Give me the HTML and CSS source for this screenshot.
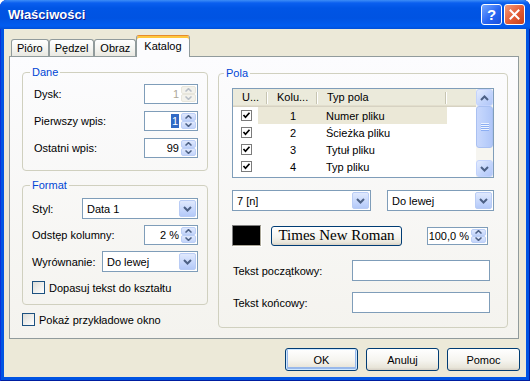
FILE: index.html
```html
<!DOCTYPE html>
<html>
<head>
    <meta charset="utf-8">
    <title>Właściwości</title>
    <link rel="stylesheet" href="styles.css">
</head>
<body>
    <div class="window">
        <div class="titlebar">
            <span class="title">Właściwości</span>
            <span class="cap-btn help">?</span>
            <span class="cap-btn close">
                <svg width="11" height="11" viewBox="0 0 11 11"><path d="M1.5 1.5 L9.5 9.5 M9.5 1.5 L1.5 9.5" stroke="#fff" stroke-width="2" stroke-linecap="square"/></svg>
            </span>
        </div>

        <div class="client">
            <div class="tabs">
                <span class="tab">Pióro</span>
                <span class="tab">Pędzel</span>
                <span class="tab">Obraz</span>
                <span class="tab active">Katalog</span>
            </div>

            <div class="tab-panel">
                <div class="left-col">
                    <fieldset class="group group-data">
                        <legend>Dane</legend>
                        <div class="field">
                            <label>Dysk:</label>
                            <div class="spin spin-count disabled">
                                <span class="spin-value">1</span>
                                <span class="spin-btns">
                                    <span class="spin-btn"><svg width="7" height="4"><use href="#arrow-up"/></svg></span>
                                    <span class="spin-btn"><svg width="7" height="4"><use href="#arrow-down"/></svg></span>
                                </span>
                            </div>
                        </div>
                        <div class="field">
                            <label>Pierwszy wpis:</label>
                            <div class="spin spin-count">
                                <span class="spin-value"><span class="selected-text">1</span></span>
                                <span class="spin-btns">
                                    <span class="spin-btn"><svg width="7" height="4"><use href="#arrow-up"/></svg></span>
                                    <span class="spin-btn"><svg width="7" height="4"><use href="#arrow-down"/></svg></span>
                                </span>
                            </div>
                        </div>
                        <div class="field">
                            <label>Ostatni wpis:</label>
                            <div class="spin spin-count">
                                <span class="spin-value">99</span>
                                <span class="spin-btns">
                                    <span class="spin-btn"><svg width="7" height="4"><use href="#arrow-up"/></svg></span>
                                    <span class="spin-btn"><svg width="7" height="4"><use href="#arrow-down"/></svg></span>
                                </span>
                            </div>
                        </div>
                    </fieldset>

                    <fieldset class="group group-format">
                        <legend>Format</legend>
                        <div class="field">
                            <label>Styl:</label>
                            <div class="combo combo-style">
                                <span class="combo-text">Data 1</span>
                                <span class="combo-btn"><svg width="9" height="6"><use href="#chevron"/></svg></span>
                            </div>
                        </div>
                        <div class="field">
                            <label>Odstęp kolumny:</label>
                            <div class="spin spin-count">
                                <span class="spin-value">2 %</span>
                                <span class="spin-btns">
                                    <span class="spin-btn"><svg width="7" height="4"><use href="#arrow-up"/></svg></span>
                                    <span class="spin-btn"><svg width="7" height="4"><use href="#arrow-down"/></svg></span>
                                </span>
                            </div>
                        </div>
                        <div class="field">
                            <label>Wyrównanie:</label>
                            <div class="combo combo-align">
                                <span class="combo-text">Do lewej</span>
                                <span class="combo-btn"><svg width="9" height="6"><use href="#chevron"/></svg></span>
                            </div>
                        </div>
                        <label class="check-row">
                            <span class="xp-check"></span>
                            Dopasuj tekst do kształtu
                        </label>
                    </fieldset>

                    <label class="check-row preview-check">
                        <span class="xp-check"></span>
                        Pokaż przykładowe okno
                    </label>
                </div>

                <fieldset class="group group-fields">
                    <legend>Pola</legend>
                    <div class="listview">
                        <div class="lv-body">
                            <div class="lv-header">
                                <span class="lv-col col-use">U...</span>
                                <span class="lv-col col-num">Kolu...</span>
                                <span class="lv-col col-type">Typ pola</span>
                                <span class="lv-col col-fill"></span>
                            </div>
                            <div class="lv-row">
                                <span class="lv-check"><span class="box"><svg width="9" height="9"><use href="#tick"/></svg></span></span>
                                <span class="lv-item selected">
                                    <span class="lv-num">1</span>
                                    <span class="lv-type">Numer pliku</span>
                                </span>
                            </div>
                            <div class="lv-row">
                                <span class="lv-check"><span class="box"><svg width="9" height="9"><use href="#tick"/></svg></span></span>
                                <span class="lv-item">
                                    <span class="lv-num">2</span>
                                    <span class="lv-type">Ścieżka pliku</span>
                                </span>
                            </div>
                            <div class="lv-row">
                                <span class="lv-check"><span class="box"><svg width="9" height="9"><use href="#tick"/></svg></span></span>
                                <span class="lv-item">
                                    <span class="lv-num">3</span>
                                    <span class="lv-type">Tytuł pliku</span>
                                </span>
                            </div>
                            <div class="lv-row">
                                <span class="lv-check"><span class="box"><svg width="9" height="9"><use href="#tick"/></svg></span></span>
                                <span class="lv-item">
                                    <span class="lv-num">4</span>
                                    <span class="lv-type">Typ pliku</span>
                                </span>
                            </div>
                        </div>
                        <div class="scrollbar">
                            <span class="sb-btn"><svg width="9" height="6"><use href="#chevron-up"/></svg></span>
                            <div class="sb-track">
                                <span class="sb-thumb"><span class="grip"></span></span>
                            </div>
                            <span class="sb-btn"><svg width="9" height="6"><use href="#chevron"/></svg></span>
                        </div>
                    </div>

                    <div class="pola-row combos">
                        <div class="combo combo-column">
                            <span class="combo-text">7 [n]</span>
                            <span class="combo-btn"><svg width="9" height="6"><use href="#chevron"/></svg></span>
                        </div>
                        <div class="combo combo-justify">
                            <span class="combo-text">Do lewej</span>
                            <span class="combo-btn"><svg width="9" height="6"><use href="#chevron"/></svg></span>
                        </div>
                    </div>

                    <div class="pola-row font-row">
                        <span class="color-swatch"></span>
                        <span class="btn font-btn">Times New Roman</span>
                        <div class="spin spin-scale">
                            <span class="spin-value">100,0 %</span>
                            <span class="spin-btns">
                                <span class="spin-btn"><svg width="7" height="4"><use href="#arrow-up"/></svg></span>
                                <span class="spin-btn"><svg width="7" height="4"><use href="#arrow-down"/></svg></span>
                            </span>
                        </div>
                    </div>

                    <div class="pola-row text-row first">
                        <label>Tekst początkowy:</label>
                        <span class="textbox"></span>
                    </div>
                    <div class="pola-row text-row">
                        <label>Tekst końcowy:</label>
                        <span class="textbox"></span>
                    </div>
                </fieldset>
            </div>

            <div class="dialog-buttons">
                <span class="btn default">OK</span>
                <span class="btn">Anuluj</span>
                <span class="btn">Pomoc</span>
            </div>
        </div>
    </div>

    <svg class="sprite">
        <symbol id="arrow-up" viewBox="0 0 7 4"><path d="M0.5 3.5 L3.5 0.6 L6.5 3.5" fill="none" stroke="#4d6185" stroke-width="1.5"/></symbol>
        <symbol id="arrow-down" viewBox="0 0 7 4"><path d="M0.5 0.5 L3.5 3.4 L6.5 0.5" fill="none" stroke="#4d6185" stroke-width="1.5"/></symbol>
        <symbol id="chevron" viewBox="0 0 9 6"><path d="M1 1 L4.5 4.5 L8 1" fill="none" stroke="#4d6185" stroke-width="2"/></symbol>
        <symbol id="chevron-up" viewBox="0 0 9 6"><path d="M1 5 L4.5 1.5 L8 5" fill="none" stroke="#4d6185" stroke-width="2"/></symbol>
        <symbol id="tick" viewBox="0 0 9 9"><path d="M1.5 4 L3.5 6.2 L7.5 1.8" fill="none" stroke="#000" stroke-width="1.7"/></symbol>
    </svg>
</body>
</html>
```

FILE: styles.css
```css
* {
    box-sizing: border-box;
}

body {
    margin: 0;
    width: 530px;
    height: 381px;
    overflow: hidden;
    background: #ffffff;
    font-family: "Liberation Sans", Arial, sans-serif;
    font-size: 11px;
    color: #000;
}

.sprite {
    display: none;
}

/* Window frame */
.window {
    display: flex;
    flex-direction: column;
    width: 530px;
    height: 381px;
    background: #0054e3;
    border-radius: 7px 7px 0 0;
    box-shadow: inset 1px 0 #0831d9, inset -1px 0 #001ea0, inset 0 -1px #001ea0;
}

.titlebar {
    display: flex;
    align-items: center;
    gap: 2px;
    height: 29px;
    padding: 0 5px 0 8px;
    border-radius: 7px 7px 0 0;
    background: linear-gradient(#3d8df7 0, #0a5fef 3px, #0055e5 8px, #0053e2 18px, #005cf0 26px, #004fd8 29px);
}

.title {
    flex: 1;
    color: #fff;
    font-weight: bold;
    font-size: 13px;
    text-shadow: 1px 1px #0a1c8c;
}

.cap-btn {
    display: flex;
    align-items: center;
    justify-content: center;
    width: 21px;
    height: 21px;
    border: 1px solid #fff;
    border-radius: 3px;
    color: #fff;
}

.help {
    background: linear-gradient(135deg, #76a8ff, #2766f3 55%, #1a50dc);
    font-weight: bold;
    font-size: 15px;
}

.close {
    background: linear-gradient(135deg, #f29b7c, #e25a33 55%, #c4401b);
}

.client {
    flex: 1;
    display: flex;
    flex-direction: column;
    margin: 0 4px 4px;
    padding: 6px 6px 6px 5px;
    background: #ece9d8;
}

/* Tabs */
.tabs {
    position: relative;
    z-index: 1;
    display: flex;
    align-items: flex-end;
    height: 22px;
    margin-bottom: -1px;
    padding-left: 2px;
}

.tab {
    height: 17px;
    margin-bottom: 1px;
    padding: 0 5px;
    border: 1px solid #919b9c;
    border-bottom: none;
    border-radius: 3px 3px 0 0;
    background: linear-gradient(#ffffff, #f3f3ef 60%, #e9e8e1);
    line-height: 16px;
}

.tab.active {
    height: 22px;
    margin-bottom: 0;
    padding: 0 7px;
    border-top-color: #e68b2c;
    background: #fcfcfe;
    box-shadow: inset 0 2px #ffc73c;
    line-height: 21px;
}

.tab-panel {
    display: flex;
    align-items: flex-start;
    gap: 10px;
    height: 283px;
    margin-right: 1px;
    padding: 9px 0 0 12px;
    border: 1px solid #919b9c;
    background: linear-gradient(#fcfcfe, #f4f3ee);
}

.left-col {
    width: 186px;
}

/* Group boxes */
.group {
    margin: 0;
    min-width: 0;
    border: 1px solid #d0d0bf;
    border-radius: 4px;
}

.group legend {
    padding: 0 2px;
    color: #0046d5;
    line-height: 13px;
}

.group-data {
    padding: 5px 9px 12px 11px;
}

.group-data legend {
    margin-left: -4px;
}

.group-format {
    margin-top: 8px;
    padding: 6px 9px 10px 9px;
}

.group-format legend {
    margin-left: -2px;
}

.group-fields {
    width: 290px;
    margin-top: 1px;
    padding: 8px 13px 14px 13px;
}

.group-fields legend {
    margin-left: -8px;
}

.field {
    display: flex;
    align-items: center;
    justify-content: space-between;
}

.group-data .field + .field {
    margin-top: 7px;
}

.group-format .field + .field {
    margin-top: 6px;
}

/* Spin boxes */
.spin {
    display: flex;
    height: 20px;
    border: 1px solid #7f9db9;
    background: #fff;
}

.spin-count {
    width: 54px;
}

.spin-scale {
    width: 61px;
    height: 18px;
    margin-left: 25px;
}

.spin-value {
    flex: 1;
    padding-right: 2px;
    text-align: right;
    line-height: 18px;
    white-space: nowrap;
}

.spin-scale .spin-value {
    line-height: 16px;
}

.selected-text {
    display: inline-block;
    padding: 0 1px;
    line-height: 14px;
    background: #316ac5;
    color: #fff;
}

.spin-btns {
    display: flex;
    flex-direction: column;
    width: 15px;
    margin: 1px 1px 1px 0;
}

.spin-btn {
    flex: 1;
    display: flex;
    align-items: center;
    justify-content: center;
    border: 1px solid #bccff7;
    border-radius: 2px;
    background: linear-gradient(#dfe8fd, #c3d4fa);
}

.spin.disabled .spin-value {
    color: #aca899;
}

.spin.disabled .spin-btn {
    border-color: #e8e6dc;
    background: #f3f2ec;
}

.spin.disabled .spin-btn svg {
    opacity: 0.35;
}

/* Combo boxes */
.combo {
    display: flex;
    align-items: center;
    height: 21px;
    border: 1px solid #7f9db9;
    background: #fff;
}

.combo-style {
    width: 116px;
}

.combo-align {
    width: 96px;
}

.combo-column {
    width: 139px;
}

.combo-justify {
    width: 107px;
    margin-left: auto;
}

.combo-text {
    flex: 1;
    padding-left: 4px;
    white-space: nowrap;
}

.combo-btn {
    display: flex;
    align-items: center;
    justify-content: center;
    align-self: stretch;
    width: 17px;
    margin: 1px;
    border: 1px solid #b9ccf5;
    border-radius: 2px;
    background: linear-gradient(#e0e9fd, #c1d3fb 70%, #b4c9f8);
}

/* Checkboxes */
.check-row {
    display: flex;
    align-items: center;
    gap: 4px;
    height: 13px;
}

.group-format .check-row {
    margin-top: 9px;
}

.preview-check {
    margin-top: 8px;
}

.xp-check {
    width: 13px;
    height: 13px;
    border: 1px solid #1c5180;
    background: linear-gradient(135deg, #dcdcd7, #ffffff);
}

/* List view */
.listview {
    display: flex;
    height: 90px;
    border: 1px solid #7f9db9;
    background: #fff;
}

.lv-body {
    flex: 1;
}

.lv-header {
    display: flex;
    height: 18px;
    background: #ebeadb;
    box-shadow: inset 0 -1px #d6d2c2, inset 0 -2px #e2decd;
}

.lv-col {
    padding-left: 9px;
    line-height: 17px;
    white-space: nowrap;
    background: linear-gradient(#c7c5b2, #c7c5b2) no-repeat right 1px top 3px / 1px 12px,
                linear-gradient(#fff, #fff) no-repeat right 0 top 3px / 1px 12px;
}

.col-use {
    width: 35px;
}

.col-num {
    width: 50px;
}

.col-type {
    width: 129px;
}

.col-fill {
    flex: 1;
    background: none;
}

.lv-row {
    display: flex;
    height: 17px;
}

.lv-check {
    display: flex;
    align-items: center;
    width: 25px;
    padding-left: 8px;
}

.lv-check .box {
    display: flex;
    align-items: center;
    justify-content: center;
    width: 11px;
    height: 11px;
    border: 1px solid #7b7b7b;
    background: #fff;
}

.lv-item {
    display: flex;
    width: 189px;
    padding-left: 10px;
    line-height: 18px;
}

.lv-item.selected {
    background: #ebe8d7;
}

.lv-num {
    width: 50px;
    text-align: center;
}

.lv-type {
    padding-left: 8px;
}

/* Scrollbar */
.scrollbar {
    display: flex;
    flex-direction: column;
    width: 17px;
    background: #f6f5f0;
}

.sb-btn {
    display: flex;
    align-items: center;
    justify-content: center;
    height: 17px;
    border: 1px solid #c3d3fd;
    border-radius: 3px;
    background: linear-gradient(135deg, #e4ecfe, #c1d3fb 60%, #b1c6f8);
}

.sb-track {
    flex: 1;
}

.sb-thumb {
    display: flex;
    align-items: center;
    justify-content: center;
    height: 42px;
    border: 1px solid #a9c0f1;
    border-radius: 3px;
    background: linear-gradient(90deg, #c9d8fc, #bcd0fb 50%, #b0c6f8);
}

.grip {
    width: 8px;
    height: 8px;
    background: repeating-linear-gradient(#eef4fe 0 1px, #8caef3 1px 2px);
}

/* Pola rows */
.pola-row {
    display: flex;
    align-items: center;
}

.combos {
    margin-top: 12px;
}

.font-row {
    margin-top: 14px;
}

.color-swatch {
    width: 29px;
    height: 21px;
    border: 1px solid;
    border-color: #808080 #aca899 #aca899 #808080;
    background: #000;
    box-shadow: 1px 1px #ffffff;
}

.font-btn {
    width: 131px;
    height: 20px;
    margin-left: 10px;
    font-family: "Liberation Serif", "Times New Roman", serif;
    font-size: 15px;
}

.text-row.first {
    margin-top: 14px;
}

.text-row + .text-row {
    margin-top: 11px;
}

.text-row label {
    width: 120px;
    padding-left: 1px;
}

.textbox {
    width: 138px;
    height: 21px;
    border: 1px solid #7f9db9;
    background: #fff;
}

/* Buttons */
.btn {
    display: flex;
    align-items: center;
    justify-content: center;
    border: 1px solid #003c74;
    border-radius: 3px;
    background: linear-gradient(#ffffff, #f5f4ef 55%, #e8e5d9 88%, #d6d0c5);
}

.dialog-buttons {
    display: flex;
    justify-content: flex-end;
    gap: 8px;
    margin-top: 9px;
}

.dialog-buttons .btn {
    width: 73px;
    height: 23px;
}

.btn.default {
    box-shadow: inset 0 0 0 1px #cee7ff, inset 0 -1px 0 2px #98b8ea;
}
```
